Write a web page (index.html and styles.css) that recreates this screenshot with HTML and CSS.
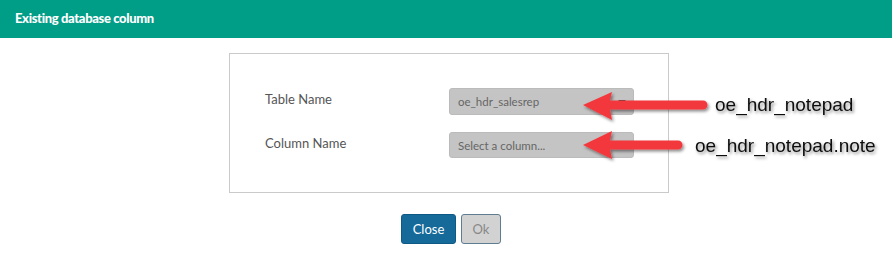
FILE: index.html
```html
<!DOCTYPE html>
<html lang="en">
<head>
    <meta charset="UTF-8">
    <title>Existing database column</title>
    <link rel="stylesheet" href="styles.css">
</head>
<body>
    <div class="header">
        <h2>Existing database column</h2>
    </div>

    <div class="content">
        <div class="panel">
            <label class="field-label">Table Name</label>
            <div class="select has-caret">oe_hdr_salesrep</div>
            <label class="field-label">Column Name</label>
            <div class="select">Select a column...</div>
        </div>

        <div class="buttons">
            <button class="btn btn-primary">Close</button>
            <button class="btn btn-disabled">Ok</button>
        </div>
    </div>

    <!-- callout arrows drawn over the dialog -->
    <svg class="callouts" width="892" height="273" viewBox="0 0 892 273">
        <defs>
            <filter id="shadow" x="-10%" y="-30%" width="130%" height="170%">
                <feDropShadow dx="1.5" dy="2" stdDeviation="1.5" flood-color="#000" flood-opacity="0.45"/>
            </filter>
        </defs>
        <g fill="#f2393d" filter="url(#shadow)">
            <path d="M583 105 L612 92 L610 100.5 L703 100.5 A4.5 4.5 0 0 1 703 109.5 L610 109.5 L612 120 Z"/>
            <path d="M583 145 L612 131 L610 140.5 L678 140.5 A4.5 4.5 0 0 1 678 149.5 L610 149.5 L612 159 Z"/>
        </g>
        <g class="callout-text" filter="url(#shadow)">
            <text x="715" y="111">oe_hdr_notepad</text>
            <text x="695" y="152">oe_hdr_notepad.note</text>
        </g>
    </svg>
</body>
</html>
```

FILE: styles.css
```css
* {
    margin: 0;
    padding: 0;
    box-sizing: border-box;
}

body {
    font-family: 'Lato', sans-serif;
    background-color: white;
    color: #555;
    width: 892px;
    height: 273px;
    overflow: hidden;
}

.header {
    height: 38px;
    background-color: #009d87;
    display: flex;
    align-items: center;
    padding-left: 15px;
}

.header h2 {
    color: white;
    font-size: 13px;
    font-weight: 900;
    letter-spacing: -0.35px;
    margin-top: -2px;
}

.content {
    display: flex;
    flex-direction: column;
    align-items: center;
    padding-top: 15px;
    padding-left: 6px;
}

.panel {
    width: 440px;
    border: 1px solid #cacaca;
    padding: 34px 34px 34px 35px;
    display: grid;
    grid-template-columns: 184px 185px;
    row-gap: 17px;
    align-items: center;
}

.field-label {
    font-size: 13px;
    color: #555;
    margin-top: -5px;
}

.select {
    height: 27px;
    background-color: #c4c4c4;
    border: 1px solid #bbb;
    border-radius: 3px;
    font-size: 11.5px;
    color: #666;
    padding-left: 8px;
    display: flex;
    align-items: center;
    position: relative;
}

.select + .field-label + .select {
    height: 26px;
}

.has-caret::after {
    content: '';
    position: absolute;
    right: 7px;
    top: 11px;
    border-left: 4px solid transparent;
    border-right: 4px solid transparent;
    border-top: 4px solid #444;
}

.buttons {
    display: flex;
    gap: 5px;
    margin-top: 21px;
    margin-left: 4px;
}

.btn {
    height: 30px;
    border-radius: 3px;
    font-family: 'Lato', sans-serif;
    font-size: 13px;
    cursor: pointer;
}

.btn-primary {
    width: 55px;
    background-color: #156a9a;
    border: 1px solid #0f5a85;
    color: white;
}

.btn-disabled {
    width: 40px;
    background-color: #d2d2d2;
    border: 1px solid #5f7d92;
    color: #888;
}

.callouts {
    position: absolute;
    top: 0;
    left: 0;
}

.callout-text {
    font-family: 'Liberation Sans', Arial, sans-serif;
    font-size: 19px;
    fill: #111;
}
```
